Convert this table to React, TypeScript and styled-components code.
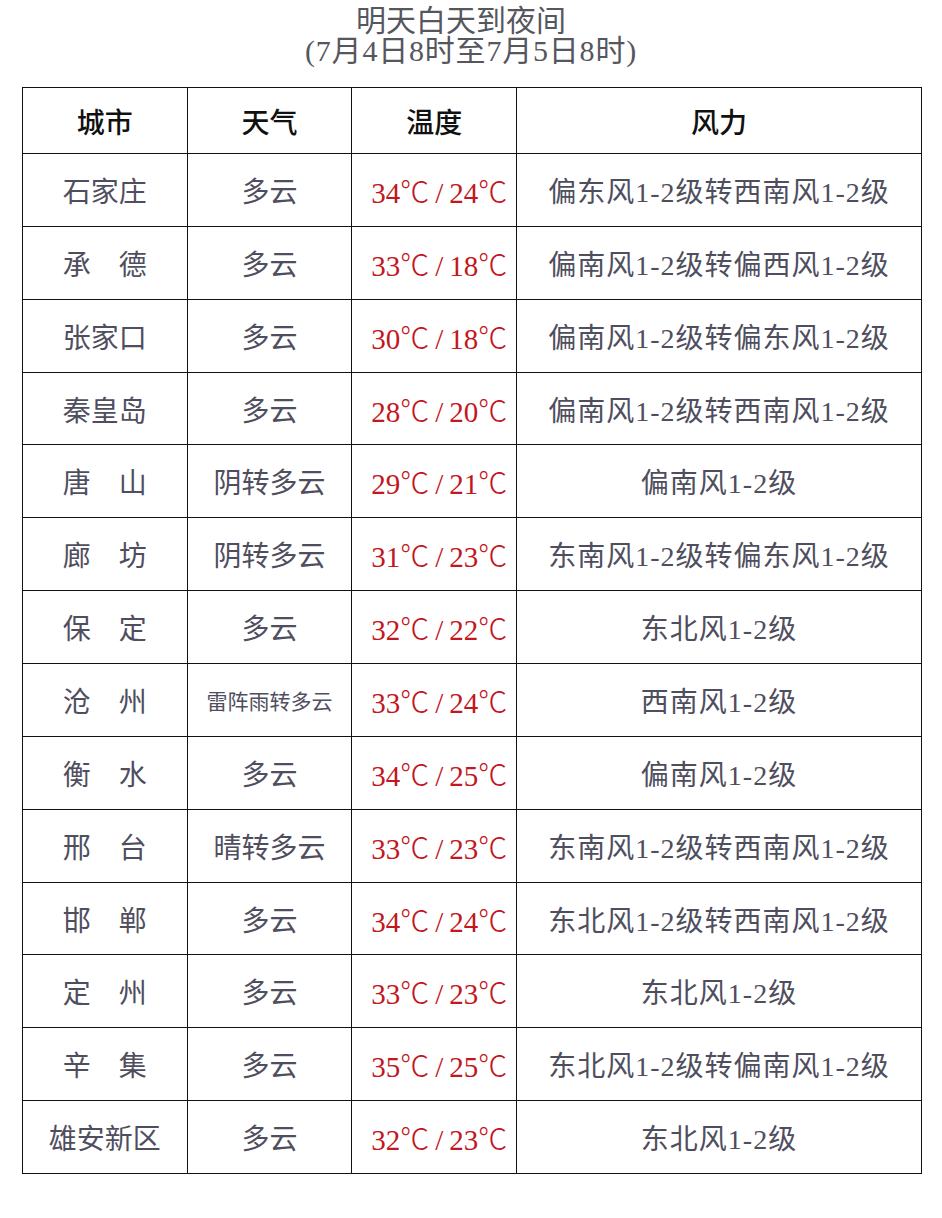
import styled, { createGlobalStyle } from 'styled-components';

const GlobalStyle = createGlobalStyle`
  html, body {
    margin: 0;
    padding: 0;
    background: #ffffff;
  }
  body {
    font-family: "Liberation Serif", "Noto Sans CJK SC", serif;
  }
`;

type Row = {
  city: string;
  weather: string;
  high: number;
  low: number;
  wind: string;
};

const rows: Row[] = [
  { city: '石家庄', weather: '多云', high: 34, low: 24, wind: '偏东风1-2级转西南风1-2级' },
  { city: '承　德', weather: '多云', high: 33, low: 18, wind: '偏南风1-2级转偏西风1-2级' },
  { city: '张家口', weather: '多云', high: 30, low: 18, wind: '偏南风1-2级转偏东风1-2级' },
  { city: '秦皇岛', weather: '多云', high: 28, low: 20, wind: '偏南风1-2级转西南风1-2级' },
  { city: '唐　山', weather: '阴转多云', high: 29, low: 21, wind: '偏南风1-2级' },
  { city: '廊　坊', weather: '阴转多云', high: 31, low: 23, wind: '东南风1-2级转偏东风1-2级' },
  { city: '保　定', weather: '多云', high: 32, low: 22, wind: '东北风1-2级' },
  { city: '沧　州', weather: '雷阵雨转多云', high: 33, low: 24, wind: '西南风1-2级' },
  { city: '衡　水', weather: '多云', high: 34, low: 25, wind: '偏南风1-2级' },
  { city: '邢　台', weather: '晴转多云', high: 33, low: 23, wind: '东南风1-2级转西南风1-2级' },
  { city: '邯　郸', weather: '多云', high: 34, low: 24, wind: '东北风1-2级转西南风1-2级' },
  { city: '定　州', weather: '多云', high: 33, low: 23, wind: '东北风1-2级' },
  { city: '辛　集', weather: '多云', high: 35, low: 25, wind: '东北风1-2级转偏南风1-2级' },
  { city: '雄安新区', weather: '多云', high: 32, low: 23, wind: '东北风1-2级' },
];

const Page = styled.div`
  width: 942px;
  padding: 6px 0 0;
  box-sizing: border-box;
`;

const Title = styled.h1`
  margin: 0;
  display: flex;
  flex-direction: column;
  align-items: center;
  font-size: 30px;
  line-height: 30px;
  font-weight: normal;
  color: #56565f;
`;

const TitleLine = styled.span<{ $shift?: number; $spacing?: number }>`
  margin-right: ${(p) => p.$shift ?? 0}px;
  letter-spacing: ${(p) => p.$spacing ?? 0}px;
`;

const Sheet = styled.table`
  margin: 21px 0 0 22px;
  width: 900px;
  border-collapse: collapse;
  table-layout: fixed;
`;

const HeadCell = styled.th<{ $w: number }>`
  width: ${(p) => p.$w}px;
  height: 65px;
  padding: 0;
  border: 1.5px solid #111;
  text-align: center;
  vertical-align: middle;
  font-size: 28px;
  font-weight: 500;
  color: #111;
`;

const Cell = styled.td<{ $small?: boolean; $hot?: boolean; $wide?: boolean }>`
  height: 71.86px;
  padding: ${(p) => (p.$hot ? '0 0 0 10px' : '0')};
  border: 1.5px solid #111;
  text-align: center;
  vertical-align: middle;
  white-space: nowrap;
  font-size: ${(p) => (p.$small ? '21px' : p.$hot ? '29px' : '28px')};
  letter-spacing: ${(p) => (p.$wide ? '1px' : '0')};
  color: ${(p) => (p.$hot ? '#c2171d' : '#4f4e5e')};
`;

const Degree = styled.span`
  font-family: "Noto Sans CJK SC", sans-serif;
  font-weight: 300;
`;

const Slash = styled.span`
  padding: 0 6px;
`;

export default function App() {
  return (
    <Page>
      <GlobalStyle />
      <Title>
        <TitleLine $shift={20}>明天白天到夜间</TitleLine>
        <TitleLine $spacing={0.8}>(7月4日8时至7月5日8时)</TitleLine>
      </Title>
      <Sheet>
        <thead>
          <tr>
            <HeadCell $w={163.5}>城市</HeadCell>
            <HeadCell $w={163.5}>天气</HeadCell>
            <HeadCell $w={163.5}>温度</HeadCell>
            <HeadCell $w={403.5}>风力</HeadCell>
          </tr>
        </thead>
        <tbody>
          {rows.map((r) => (
            <tr key={r.city}>
              <Cell>{r.city}</Cell>
              <Cell $small={r.weather.length > 4}>{r.weather}</Cell>
              <Cell $hot>
                {r.high}
                <Degree>℃</Degree>
                <Slash>/</Slash>
                {r.low}
                <Degree>℃</Degree>
              </Cell>
              <Cell $wide>{r.wind}</Cell>
            </tr>
          ))}
        </tbody>
      </Sheet>
    </Page>
  );
}
